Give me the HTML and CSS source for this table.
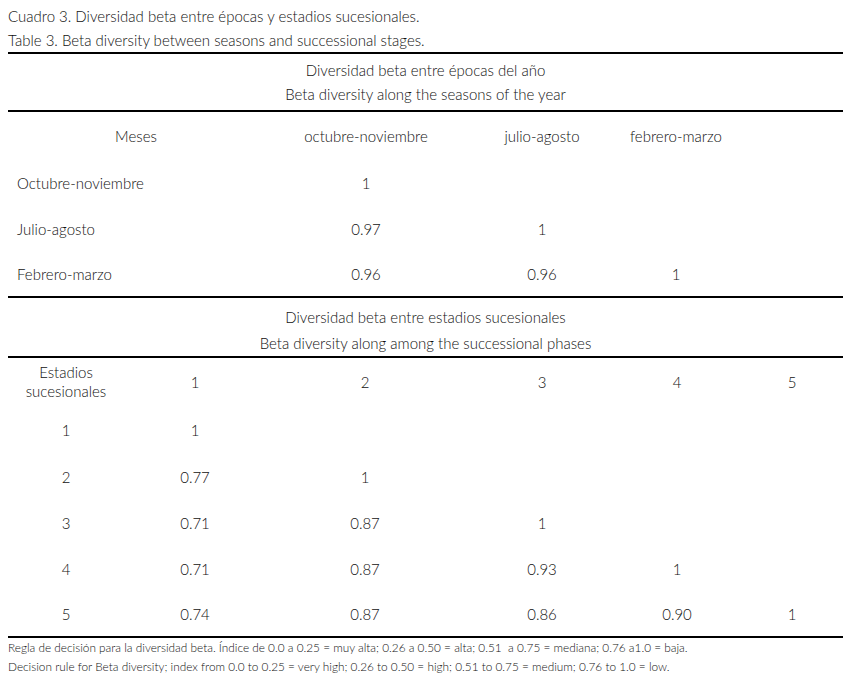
FILE: index.html
```html
<!DOCTYPE html>
<html lang="es">
<head>
<meta charset="utf-8">
<title>Cuadro 3</title>
<link rel="stylesheet" href="styles.css">
</head>
<body>
<div class="page">
  <div class="caption">
    <div>Cuadro 3. Diversidad beta entre épocas y estadios sucesionales.</div>
    <div>Table 3. Beta diversity between seasons and successional stages.</div>
  </div>

  <div class="section-head head-1">
    <div>Diversidad beta entre épocas del año</div>
    <div>Beta diversity along the seasons of the year</div>
  </div>

  <div class="grid grid-1">
    <div class="cell c-head">Meses</div>
    <div class="cell">octubre-noviembre</div>
    <div class="cell">julio-agosto</div>
    <div class="cell">febrero-marzo</div>
    <div class="cell"></div>

    <div class="cell c-label">Octubre-noviembre</div>
    <div class="cell">1</div>
    <div class="cell"></div>
    <div class="cell"></div>
    <div class="cell"></div>

    <div class="cell c-label">Julio-agosto</div>
    <div class="cell">0.97</div>
    <div class="cell">1</div>
    <div class="cell"></div>
    <div class="cell"></div>

    <div class="cell c-label">Febrero-marzo</div>
    <div class="cell">0.96</div>
    <div class="cell">0.96</div>
    <div class="cell">1</div>
    <div class="cell"></div>
  </div>

  <div class="section-head head-2">
    <div>Diversidad beta entre estadios sucesionales</div>
    <div>Beta diversity along among the successional phases</div>
  </div>

  <div class="grid grid-2">
    <div class="cell two-line">Estadios<br>sucesionales</div>
    <div class="cell">1</div>
    <div class="cell">2</div>
    <div class="cell">3</div>
    <div class="cell">4</div>
    <div class="cell last">5</div>

    <div class="cell">1</div>
    <div class="cell">1</div>
    <div class="cell"></div>
    <div class="cell"></div>
    <div class="cell"></div>
    <div class="cell last"></div>

    <div class="cell">2</div>
    <div class="cell">0.77</div>
    <div class="cell">1</div>
    <div class="cell"></div>
    <div class="cell"></div>
    <div class="cell last"></div>

    <div class="cell">3</div>
    <div class="cell">0.71</div>
    <div class="cell">0.87</div>
    <div class="cell">1</div>
    <div class="cell"></div>
    <div class="cell last"></div>

    <div class="cell">4</div>
    <div class="cell">0.71</div>
    <div class="cell">0.87</div>
    <div class="cell">0.93</div>
    <div class="cell">1</div>
    <div class="cell last"></div>

    <div class="cell">5</div>
    <div class="cell">0.74</div>
    <div class="cell">0.87</div>
    <div class="cell">0.86</div>
    <div class="cell">0.90</div>
    <div class="cell last">1</div>
  </div>

  <div class="footnote">
    <div>Regla de decisión para la diversidad beta. Índice de 0.0 a 0.25 = muy alta; 0.26 a 0.50 = alta; 0.51&nbsp; a 0.75 = mediana; 0.76 a1.0 = baja.</div>
    <div>Decision rule for Beta diversity; index from 0.0 to 0.25 = very high; 0.26 to 0.50 = high; 0.51 to 0.75 = medium; 0.76 to 1.0 = low.</div>
  </div>
</div>
</body>
</html>
```

FILE: styles.css
```css
html, body {
  margin: 0;
  padding: 0;
  background: #ffffff;
}

body {
  font-family: Lato, "Open Sans", "DejaVu Sans", sans-serif;
  font-weight: 300;
  font-size: 15px;
  color: #111111;
}

.page {
  width: 835px;
  margin-left: 8px;
}

.caption {
  padding-top: 4px;
  line-height: 24px;
  border-bottom: 2px solid #000;
}

.section-head {
  text-align: center;
  border-bottom: 2px solid #000;
}

.head-1 {
  padding: 4px 0 4px;
  line-height: 24px;
}

.head-2 {
  padding: 6px 0 0;
  line-height: 26px;
}

.grid {
  display: grid;
  border-bottom: 2px solid #000;
}

.grid-1 {
  grid-template-columns: 256px 204px 148px 120px 1fr;
  grid-template-rows: 48px 46px 46px 44px;
}

.grid-2 {
  grid-template-columns: 116px 142px 198px 156px 114px 1fr;
  grid-template-rows: 48px 48px 46px 46px 46px 44px;
}

.cell {
  display: flex;
  align-items: center;
  justify-content: center;
  text-align: center;
}

.c-label {
  justify-content: flex-start;
  padding-left: 9px;
}

.two-line {
  line-height: 19px;
}

.last {
  padding-left: 7px;
}

.footnote {
  font-size: 11.8px;
  line-height: 19px;
}
```
